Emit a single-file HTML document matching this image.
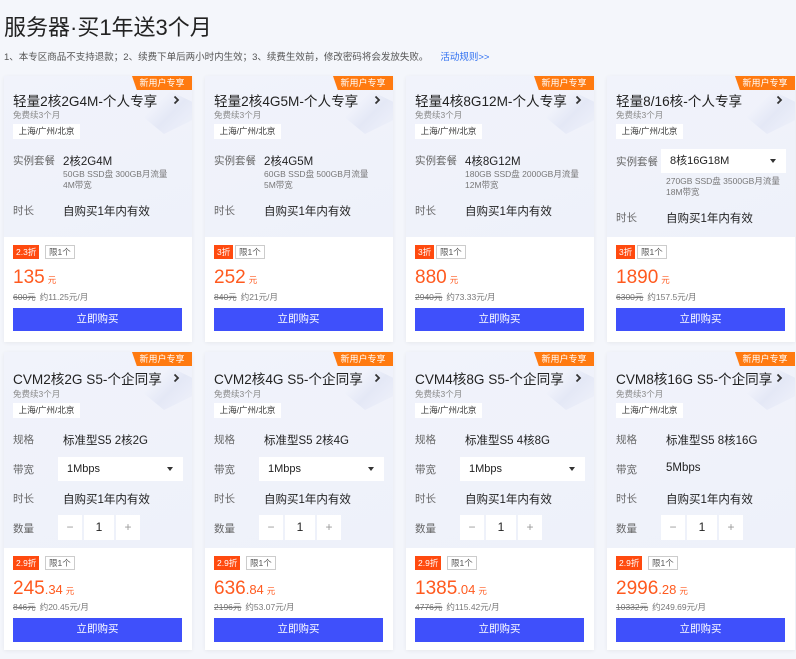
<!DOCTYPE html>
<html><head><meta charset="utf-8"><style>
*{margin:0;padding:0;box-sizing:border-box}
body{width:796px;height:659px;background:#f4f6fb;font-family:"Liberation Sans","Noto Sans CJK SC",sans-serif;position:relative;overflow:hidden;color:#222}
.a{position:absolute;white-space:nowrap}
.h1{left:4px;top:10px;font-size:22px;color:#222}
.note{left:4px;top:49px;font-size:9.5px;color:#555}
.note span{color:#2d6ef0;margin-left:12px}
.card{position:absolute;width:188px;background:#fff;box-shadow:0 1px 4px rgba(0,0,0,.06);overflow:hidden}
.top{position:absolute;left:0;top:0;width:188px;background:linear-gradient(160deg,#f1f3fb,#eef1fa)}
.badge{position:absolute;right:0;top:0;width:60px;height:14px;background:#ff7a10;color:#fff;font-size:9px;line-height:14px;text-align:center;clip-path:polygon(0 0,100% 0,100% 100%,8% 100%)}
.deco{position:absolute;right:0;top:12px;width:56px;height:46px;background:linear-gradient(135deg,rgba(225,230,246,0) 35%,#e4e8f6 60%,rgba(238,241,250,0));clip-path:polygon(50% 0,100% 30%,100% 70%,50% 100%,0 50%)}
.t{left:9px;font-size:13.6px;color:#222}
.arr{right:12px;width:7px;height:10px}
.free{left:9px;font-size:8.5px;color:#888}
.loc{left:9px;width:67px;height:15px;background:#fff;font-size:8.5px;line-height:15px;text-align:center;color:#333}
.lab{left:9px;font-size:10.5px;color:#666}
.val{left:59px;font-size:11.5px;color:#222}
.desc{left:59px;font-size:8.5px;color:#777;line-height:11px;white-space:normal;width:115px}
.sel{left:54px;width:125px;height:24px;background:#fff;font-size:11px;line-height:24px;padding-left:9px;color:#222}
.sel:after{content:"";position:absolute;right:10px;top:10px;border:3px solid transparent;border-top:4px solid #333}
.disc{left:9px;height:14px;padding:0 3px;background:#ff4a0f;color:#fff;font-size:8.5px;line-height:14px}
.lim{height:14px;padding:0 3px;border:1px solid #ccc;color:#555;font-size:8.5px;line-height:12px;background:#fff}
.price{left:9px;font-size:19px;color:#ff5a1f}
.price small{font-size:13px}
.price i{font-style:normal;font-size:8.5px;margin-left:3px}
.old{left:9px;font-size:8.5px;color:#777}
.old s{margin-right:4px}
.btn{left:9px;width:169px;height:23px;background:#3f50fb;color:#fff;font-size:10.5px;line-height:23px;text-align:center}
.st{height:25px;background:#fff;font-size:12px;line-height:25px;text-align:center;color:#999}
</style></head><body>
<svg width="0" height="0" style="position:absolute"><defs><symbol id="ch" viewBox="0 0 7 10"><path d="M1.5 1.5L5 5L1.5 8.5" fill="none" stroke="#333" stroke-width="1.8"/></symbol></defs></svg>
<div class="a h1">服务器·买1年送3个月</div>
<div class="a note">1、本专区商品不支持退款；2、续费下单后两小时内生效；3、续费生效前，修改密码将会发放失败。<span>活动规则&gt;&gt;</span></div>

<!-- top row -->
<div class="card" style="left:4px;top:76px;height:266px">
<div class="top" style="height:161px"></div><div class="deco"></div><div class="badge">新用户专享</div>
<div class="a t" style="top:14px">轻量2核2G4M-个人专享</div><svg class="a arr" style="top:19px"><use href="#ch"/></svg>
<div class="a free" style="top:33px">免费续3个月</div><div class="a loc" style="top:48px">上海/广州/北京</div>
<div class="a lab" style="top:77px">实例套餐</div><div class="a val" style="top:77px">2核2G4M</div>
<div class="a desc" style="top:93px">50GB SSD盘 300GB月流量 4M带宽</div>
<div class="a lab" style="top:127px">时长</div><div class="a val" style="top:127px">自购买1年内有效</div>
<div class="a disc" style="top:169px">2.3折</div><div class="a lim" style="left:41px;top:169px">限1个</div>
<div class="a price" style="top:191px">135<i>元</i></div>
<div class="a old" style="top:215px"><s>600元</s>约11.25元/月</div>
<div class="a btn" style="top:232px">立即购买</div></div>

<div class="card" style="left:205px;top:76px;height:266px">
<div class="top" style="height:161px"></div><div class="deco"></div><div class="badge">新用户专享</div>
<div class="a t" style="top:14px">轻量2核4G5M-个人专享</div><svg class="a arr" style="top:19px"><use href="#ch"/></svg>
<div class="a free" style="top:33px">免费续3个月</div><div class="a loc" style="top:48px">上海/广州/北京</div>
<div class="a lab" style="top:77px">实例套餐</div><div class="a val" style="top:77px">2核4G5M</div>
<div class="a desc" style="top:93px">60GB SSD盘 500GB月流量 5M带宽</div>
<div class="a lab" style="top:127px">时长</div><div class="a val" style="top:127px">自购买1年内有效</div>
<div class="a disc" style="top:169px">3折</div><div class="a lim" style="left:30px;top:169px">限1个</div>
<div class="a price" style="top:191px">252<i>元</i></div>
<div class="a old" style="top:215px"><s>840元</s>约21元/月</div>
<div class="a btn" style="top:232px">立即购买</div></div>

<div class="card" style="left:406px;top:76px;height:266px">
<div class="top" style="height:161px"></div><div class="deco"></div><div class="badge">新用户专享</div>
<div class="a t" style="top:14px">轻量4核8G12M-个人专享</div><svg class="a arr" style="top:19px"><use href="#ch"/></svg>
<div class="a free" style="top:33px">免费续3个月</div><div class="a loc" style="top:48px">上海/广州/北京</div>
<div class="a lab" style="top:77px">实例套餐</div><div class="a val" style="top:77px">4核8G12M</div>
<div class="a desc" style="top:93px">180GB SSD盘 2000GB月流量 12M带宽</div>
<div class="a lab" style="top:127px">时长</div><div class="a val" style="top:127px">自购买1年内有效</div>
<div class="a disc" style="top:169px">3折</div><div class="a lim" style="left:30px;top:169px">限1个</div>
<div class="a price" style="top:191px">880<i>元</i></div>
<div class="a old" style="top:215px"><s>2940元</s>约73.33元/月</div>
<div class="a btn" style="top:232px">立即购买</div></div>

<div class="card" style="left:607px;top:76px;height:266px">
<div class="top" style="height:161px"></div><div class="deco"></div><div class="badge">新用户专享</div>
<div class="a t" style="top:14px">轻量8/16核-个人专享</div><svg class="a arr" style="top:19px"><use href="#ch"/></svg>
<div class="a free" style="top:33px">免费续3个月</div><div class="a loc" style="top:48px">上海/广州/北京</div>
<div class="a lab" style="top:78px">实例套餐</div><div class="a sel" style="top:73px">8核16G18M</div>
<div class="a desc" style="top:100px">270GB SSD盘 3500GB月流量 18M带宽</div>
<div class="a lab" style="top:134px">时长</div><div class="a val" style="top:134px">自购买1年内有效</div>
<div class="a disc" style="top:169px">3折</div><div class="a lim" style="left:30px;top:169px">限1个</div>
<div class="a price" style="top:191px">1890<i>元</i></div>
<div class="a old" style="top:215px"><s>6300元</s>约157.5元/月</div>
<div class="a btn" style="top:232px">立即购买</div></div>

<!-- bottom row -->
<div class="card" style="left:4px;top:352px;height:298px">
<div class="top" style="height:196px"></div><div class="deco"></div><div class="badge">新用户专享</div>
<div class="a t" style="top:16px">CVM2核2G S5-个企同享</div><svg class="a arr" style="top:21px"><use href="#ch"/></svg>
<div class="a free" style="top:36px">免费续3个月</div><div class="a loc" style="top:51px">上海/广州/北京</div>
<div class="a lab" style="top:80px">规格</div><div class="a val" style="top:80px">标准型S5 2核2G</div>
<div class="a lab" style="top:110px">带宽</div><div class="a sel" style="top:105px">1Mbps</div>
<div class="a lab" style="top:139px">时长</div><div class="a val" style="top:139px">自购买1年内有效</div>
<div class="a lab" style="top:169px">数量</div>
<div class="a st" style="left:54px;top:163px;width:24px">−</div><div class="a st" style="left:80px;top:163px;width:30px;color:#222">1</div><div class="a st" style="left:112px;top:163px;width:24px">+</div>
<div class="a disc" style="top:204px">2.9折</div><div class="a lim" style="left:41px;top:204px">限1个</div>
<div class="a price" style="top:226px">245<small>.34</small><i>元</i></div>
<div class="a old" style="top:249px"><s>846元</s>约20.45元/月</div>
<div class="a btn" style="top:266px;height:24px">立即购买</div></div>

<div class="card" style="left:205px;top:352px;height:298px">
<div class="top" style="height:196px"></div><div class="deco"></div><div class="badge">新用户专享</div>
<div class="a t" style="top:16px">CVM2核4G S5-个企同享</div><svg class="a arr" style="top:21px"><use href="#ch"/></svg>
<div class="a free" style="top:36px">免费续3个月</div><div class="a loc" style="top:51px">上海/广州/北京</div>
<div class="a lab" style="top:80px">规格</div><div class="a val" style="top:80px">标准型S5 2核4G</div>
<div class="a lab" style="top:110px">带宽</div><div class="a sel" style="top:105px">1Mbps</div>
<div class="a lab" style="top:139px">时长</div><div class="a val" style="top:139px">自购买1年内有效</div>
<div class="a lab" style="top:169px">数量</div>
<div class="a st" style="left:54px;top:163px;width:24px">−</div><div class="a st" style="left:80px;top:163px;width:30px;color:#222">1</div><div class="a st" style="left:112px;top:163px;width:24px">+</div>
<div class="a disc" style="top:204px">2.9折</div><div class="a lim" style="left:41px;top:204px">限1个</div>
<div class="a price" style="top:226px">636<small>.84</small><i>元</i></div>
<div class="a old" style="top:249px"><s>2196元</s>约53.07元/月</div>
<div class="a btn" style="top:266px;height:24px">立即购买</div></div>

<div class="card" style="left:406px;top:352px;height:298px">
<div class="top" style="height:196px"></div><div class="deco"></div><div class="badge">新用户专享</div>
<div class="a t" style="top:16px">CVM4核8G S5-个企同享</div><svg class="a arr" style="top:21px"><use href="#ch"/></svg>
<div class="a free" style="top:36px">免费续3个月</div><div class="a loc" style="top:51px">上海/广州/北京</div>
<div class="a lab" style="top:80px">规格</div><div class="a val" style="top:80px">标准型S5 4核8G</div>
<div class="a lab" style="top:110px">带宽</div><div class="a sel" style="top:105px">1Mbps</div>
<div class="a lab" style="top:139px">时长</div><div class="a val" style="top:139px">自购买1年内有效</div>
<div class="a lab" style="top:169px">数量</div>
<div class="a st" style="left:54px;top:163px;width:24px">−</div><div class="a st" style="left:80px;top:163px;width:30px;color:#222">1</div><div class="a st" style="left:112px;top:163px;width:24px">+</div>
<div class="a disc" style="top:204px">2.9折</div><div class="a lim" style="left:41px;top:204px">限1个</div>
<div class="a price" style="top:226px">1385<small>.04</small><i>元</i></div>
<div class="a old" style="top:249px"><s>4776元</s>约115.42元/月</div>
<div class="a btn" style="top:266px;height:24px">立即购买</div></div>

<div class="card" style="left:607px;top:352px;height:298px">
<div class="top" style="height:196px"></div><div class="deco"></div><div class="badge">新用户专享</div>
<div class="a t" style="top:16px">CVM8核16G S5-个企同享</div><svg class="a arr" style="top:21px"><use href="#ch"/></svg>
<div class="a free" style="top:36px">免费续3个月</div><div class="a loc" style="top:51px">上海/广州/北京</div>
<div class="a lab" style="top:80px">规格</div><div class="a val" style="top:80px">标准型S5 8核16G</div>
<div class="a lab" style="top:110px">带宽</div><div class="a val" style="top:110px">5Mbps</div>
<div class="a lab" style="top:139px">时长</div><div class="a val" style="top:139px">自购买1年内有效</div>
<div class="a lab" style="top:169px">数量</div>
<div class="a st" style="left:54px;top:163px;width:24px">−</div><div class="a st" style="left:80px;top:163px;width:30px;color:#222">1</div><div class="a st" style="left:112px;top:163px;width:24px">+</div>
<div class="a disc" style="top:204px">2.9折</div><div class="a lim" style="left:41px;top:204px">限1个</div>
<div class="a price" style="top:226px">2996<small>.28</small><i>元</i></div>
<div class="a old" style="top:249px"><s>10332元</s>约249.69元/月</div>
<div class="a btn" style="top:266px;height:24px">立即购买</div></div>
</body></html>
